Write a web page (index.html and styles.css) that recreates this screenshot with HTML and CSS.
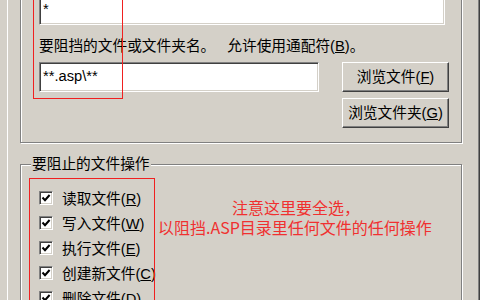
FILE: index.html
```html
<!DOCTYPE html>
<html lang="zh-CN">
<head>
<meta charset="utf-8">
<link rel="stylesheet" href="styles.css">
</head>
<body>
<div class="tab">
  <fieldset class="group g1">
    <div class="g1-body">
      <div class="edit big">*</div>
      <div class="label">要阻挡的文件或文件夹名。<span class="hint">允许使用通配符(<u>B</u>)。</span></div>
      <div class="row">
        <div class="edit path">**.asp\**</div>
        <div class="btns">
          <button class="btn">浏览文件(<u>F</u>)</button>
          <button class="btn">浏览文件夹(<u>G</u>)</button>
        </div>
      </div>
    </div>
  </fieldset>
  <fieldset class="group g2">
    <legend>要阻止的文件操作</legend>
    <ul class="checks">
      <li><span class="cb"><svg viewBox="0 0 10 10"><polyline points="1.5,4.5 4,7.2 8.6,2"/></svg></span><span>读取文件(<u>R</u>)</span></li>
      <li><span class="cb"><svg viewBox="0 0 10 10"><polyline points="1.5,4.5 4,7.2 8.6,2"/></svg></span><span>写入文件(<u>W</u>)</span></li>
      <li><span class="cb"><svg viewBox="0 0 10 10"><polyline points="1.5,4.5 4,7.2 8.6,2"/></svg></span><span>执行文件(<u>E</u>)</span></li>
      <li><span class="cb"><svg viewBox="0 0 10 10"><polyline points="1.5,4.5 4,7.2 8.6,2"/></svg></span><span>创建新文件(<u>C</u>)</span></li>
      <li><span class="cb"><svg viewBox="0 0 10 10"><polyline points="1.5,4.5 4,7.2 8.6,2"/></svg></span><span>删除文件(<u>D</u>)</span></li>
    </ul>
  </fieldset>
</div>
<div class="mark mark1"></div>
<div class="mark mark2"></div>
<div class="note">
  <div class="note1">注意这里要全选，</div>
  <div class="note2">以阻挡.ASP目录里任何文件的任何操作</div>
</div>
</body>
</html>
```

FILE: styles.css
```css
html, body {
  margin: 0;
  padding: 0;
  width: 480px;
  height: 300px;
  overflow: hidden;
  background: #d4d0c8;
}
body {
  font-family: "Liberation Sans", "Noto Sans CJK SC", sans-serif;
  font-size: 14.7px;
  color: #000;
}
.tab {
  margin-top: -40px;
  margin-left: 7px;
  width: 472px;
  height: 360px;
  box-sizing: border-box;
  border-left: 1px solid #fff;
  border-right: 1px solid #808080;
  box-shadow: 1px 0 0 #404040;
  padding-left: 12px;
}
.group {
  margin: 0;
  padding: 0;
  width: 442px;
  box-sizing: border-box;
  border: 1px solid #808080;
  box-shadow: inset 1px 1px 0 #fff, 1px 1px 0 #fff;
  min-width: 0;
}
.g1-body {
  padding: 19px 13px 14px 18px;
}
.edit {
  box-sizing: border-box;
  background: #fff;
  border: 1px solid;
  border-color: #808080 #fff #fff #808080;
  box-shadow: inset 1px 1px 0 #404040, inset -1px -1px 0 #d4d0c8;
  line-height: 17px;
  padding-left: 3px;
}
.edit.big {
  width: 406px;
  height: 45px;
  padding-top: 20px;
}
.label {
  margin-top: 11px;
  line-height: 20px;
  white-space: nowrap;
}
.hint {
  margin-left: 12px;
}
.row {
  margin-top: 6px;
  display: flex;
  justify-content: space-between;
}
.edit.path {
  width: 280px;
  height: 30px;
  padding-top: 5px;
}
.btns {
  display: flex;
  flex-direction: column;
  gap: 6px;
  margin-right: -1px;
}
.btn {
  width: 107px;
  height: 30px;
  margin: 0;
  padding: 0;
  font: inherit;
  color: #000;
  background: #d4d0c8;
  border: 1px solid;
  border-color: #fff #404040 #404040 #fff;
  box-shadow: inset -1px -1px 0 #808080;
  line-height: 18px;
}
.g2 {
  margin-top: 13px;
  height: 200px;
}
.g2 legend {
  margin-left: 10px;
  padding: 0 1px;
  line-height: 17px;
  background: #d4d0c8;
}
.checks {
  list-style: none;
  margin: 0;
  padding: 12px 0 0 18px;
}
.checks li {
  display: flex;
  align-items: center;
  gap: 9px;
  height: 25px;
}
.cb {
  box-sizing: border-box;
  width: 14px;
  height: 14px;
  background: #fff;
  border: 1px solid;
  border-color: #808080 #fff #fff #808080;
  box-shadow: inset 1px 1px 0 #404040, inset -1px -1px 0 #d4d0c8;
  display: flex;
  align-items: center;
  justify-content: center;
}
.cb svg {
  width: 10px;
  height: 10px;
  fill: none;
  stroke: #000;
  stroke-width: 2;
}
.mark {
  position: absolute;
  border: 1px solid #f02020;
}
.mark1 {
  left: 33px;
  top: -10px;
  width: 88px;
  height: 107px;
}
.mark2 {
  left: 29px;
  top: 178px;
  width: 124px;
  height: 200px;
}
.note {
  position: absolute;
  left: 158px;
  top: 197px;
  color: #f03030;
  font-family: "Noto Sans CJK SC", sans-serif;
  font-size: 16px;
  line-height: 20px;
  white-space: nowrap;
}
.note1, .note2 {
  height: 20px;
  overflow: visible;
}
.note1 {
  margin-left: 74px;
}
```
